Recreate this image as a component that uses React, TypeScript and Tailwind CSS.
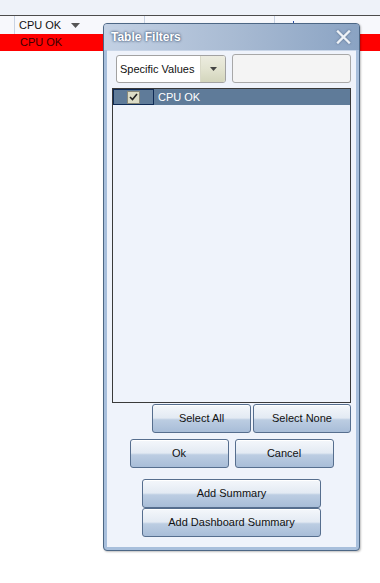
import React from "react";

const font = { fontFamily: '"Liberation Sans", Arial, sans-serif' };

function Btn({ label, w }: { label: string; w: string }) {
  return (
    <div
      className={`${w} h-[29px] flex items-center justify-center rounded-[3px] border border-[#566e8e] text-[11px] text-[#111] bg-[linear-gradient(to_bottom,#f4f7fb_0%,#e3eaf3_48%,#bccde2_55%,#a8bdd8_100%)] shadow-[inset_0_1px_0_#ffffff]`}
    >
      {label}
    </div>
  );
}

export default function App() {
  return (
    <div className="relative w-[380px] h-[583px] bg-white overflow-hidden" style={font}>
      {/* background grid */}
      <div className="h-[16px] bg-[#eef2f9] border-b border-[#4c4c4c]" />
      <div className="h-[18px] bg-[#f7f8fc] flex items-center text-[11px] text-[#111]">
        <div className="w-[15px] h-full border-r border-[#c9d3e3]" />
        <div className="w-[130px] h-full border-r border-[#c9d3e3] flex items-center pl-[4px] gap-[10px]">
          <span>CPU OK</span>
          <svg width="9" height="5" viewBox="0 0 9 5">
            <path d="M0 0 L9 0 L4.5 5 Z" fill="#555" />
          </svg>
        </div>
        <div className="w-[130px] h-full border-r border-[#c9d3e3]" />
        <div className="flex-1 h-full relative">
          <div className="absolute left-[18px] top-[5px] w-[1px] h-[2px] bg-[#2a4ea8]" />
        </div>
      </div>
      <div className="h-[17px] bg-[#ff0000] flex items-center pl-[20px] text-[11px] text-[#3a0000]">
        CPU OK
      </div>

      {/* dialog */}
      <div className="absolute left-[103px] top-[23px] w-[257px] h-[528px] rounded-[4px] border border-[#4d6785] bg-[#a8bfdc] flex flex-col shadow-[1px_1px_2px_rgba(0,0,0,0.25)]">
        <div className="h-[26px] shrink-0 rounded-t-[3px] bg-[linear-gradient(to_right,#c3d1e4_0%,#a9bbd3_50%,#8aa3c3_100%)] flex items-center justify-between pl-[7px] pr-[8px]">
          <span
            className="text-[12px] font-bold text-white"
            style={{ textShadow: "0 0 2px #4a5f7c, 0 0 3px #4a5f7c" }}
          >
            Table Filters
          </span>
          <svg width="15" height="14" viewBox="0 0 15 14" style={{ filter: "drop-shadow(0 0 1px #5a6f8c)" }}>
            <path d="M2 1.5 L13 12.5 M13 1.5 L2 12.5" stroke="#eef2f7" strokeWidth="2.4" strokeLinecap="square" />
          </svg>
        </div>
        <div className="flex-1 mx-[3px] mb-[3px] bg-[#eff3fb] border-t border-[#c9d6e8] flex flex-col">
          {/* top row */}
          <div className="flex items-start pt-[3px] pl-[9px] gap-[6px]">
            <div className="w-[110px] h-[28px] mt-[1px] rounded-[3px] border border-[#a2a2a2] bg-white flex overflow-hidden">
              <div className="flex-1 flex items-center pl-[3px] text-[11px] text-[#111]">Specific Values</div>
              <div className="w-[25px] h-full border-l border-[#d9d9c8] bg-[linear-gradient(to_bottom,#ecece0_0%,#e2e3d0_50%,#d3d5bc_100%)] flex items-center justify-center">
                <svg width="7" height="4" viewBox="0 0 7 4">
                  <path d="M0 0 L7 0 L3.5 4 Z" fill="#444" />
                </svg>
              </div>
            </div>
            <div className="w-[119px] h-[29px] rounded-[3px] border border-[#a8a8a8] bg-[#f4f4f4]" />
          </div>
          {/* list */}
          <div className="mx-[5px] mt-[5px] h-[315px] border border-[#3a3a3a] bg-[#eff3fb]">
            <div className="h-[16px] bg-[#5f7b99] flex items-center text-[11px] text-white">
              <div className="w-[41px] h-full border border-[#0e2a55] flex items-center justify-center">
                <div className="w-[13px] h-[13px] border border-[#8a8a7a] bg-[#dcdcc6] flex items-center justify-center">
                  <svg width="9" height="8" viewBox="0 0 9 8">
                    <path d="M1 4 L3.5 6.5 L8 1" stroke="#222" strokeWidth="1.6" fill="none" />
                  </svg>
                </div>
              </div>
              <span className="pl-[4px]">CPU OK</span>
            </div>
          </div>
          {/* select all / none */}
          <div className="flex justify-end gap-[2px] pr-[5px] mt-[1px]">
            <Btn label="Select All" w="w-[99px]" />
            <Btn label="Select None" w="w-[98px]" />
          </div>
          <div className="flex justify-center gap-[6px] mt-[6px]">
            <Btn label="Ok" w="w-[99px]" />
            <Btn label="Cancel" w="w-[99px]" />
          </div>
          <div className="flex flex-col items-center mt-[11px]">
            <Btn label="Add Summary" w="w-[179px]" />
            <Btn label="Add Dashboard Summary" w="w-[179px]" />
          </div>
        </div>
      </div>
    </div>
  );
}
